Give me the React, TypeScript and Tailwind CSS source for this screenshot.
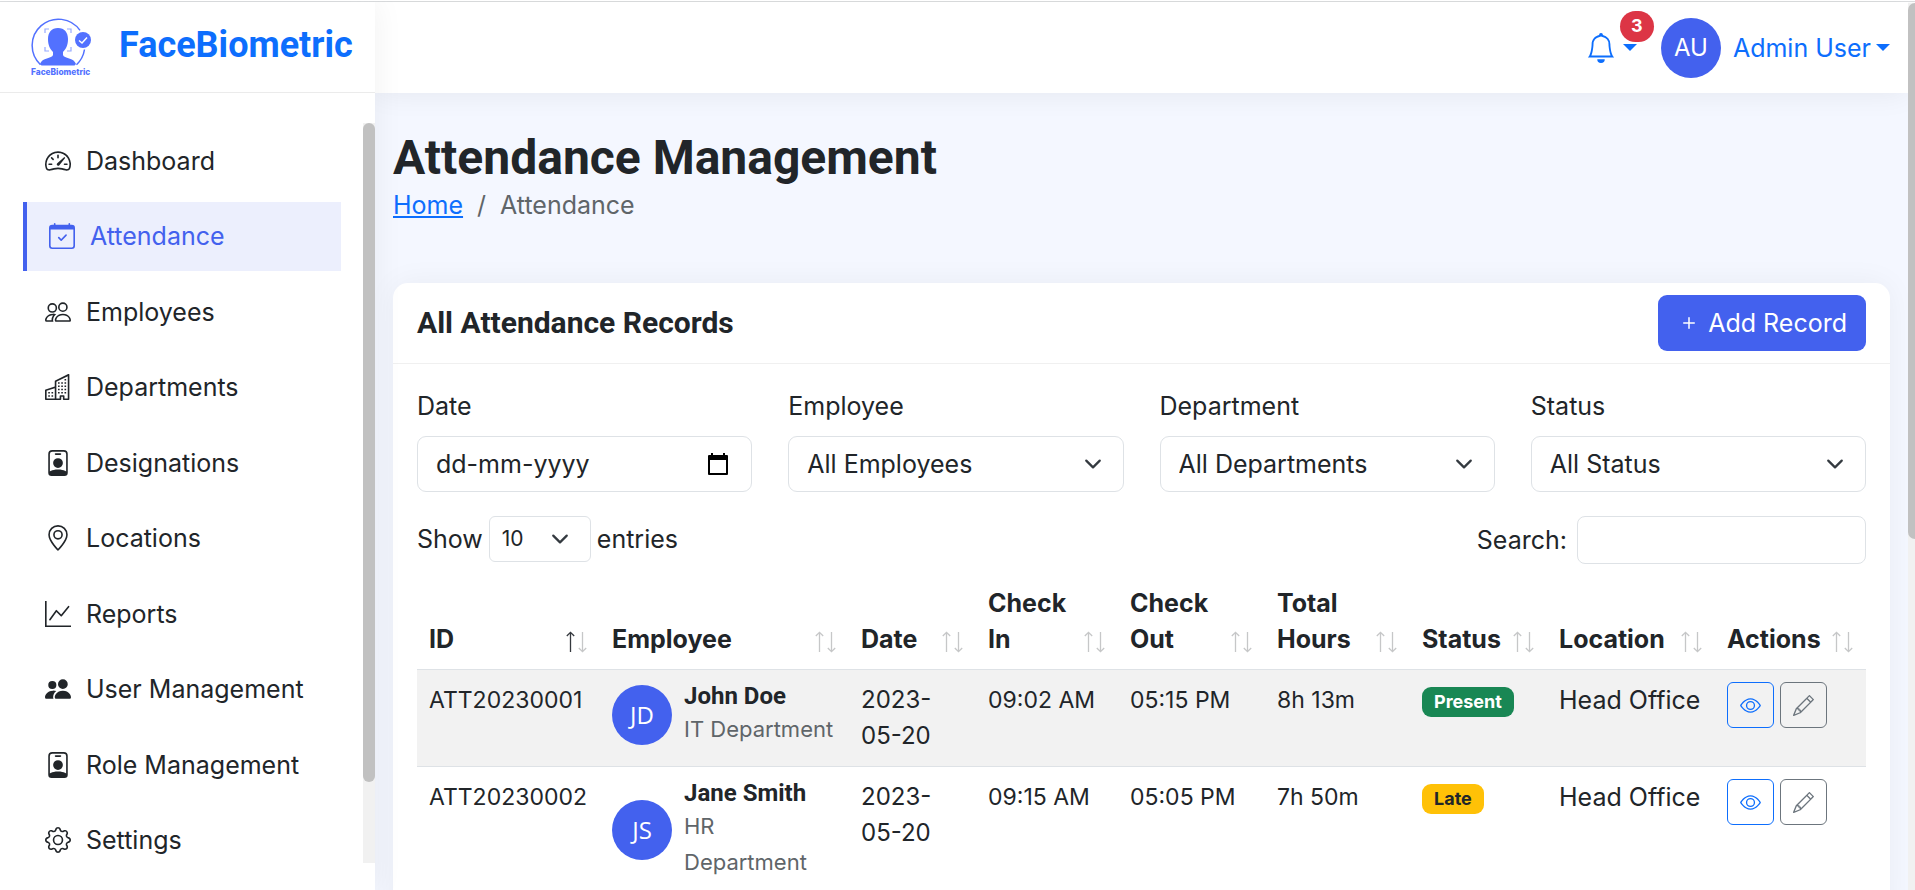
import type { ReactNode } from "react";
import type { IconType } from "react-icons";
import {
  BsBell,
  BsBuildings,
  BsEye,
  BsGear,
  BsGeoAlt,
  BsGraphUp,
  BsPencil,
  BsPeople,
  BsPeopleFill,
  BsPlus,
  BsSpeedometer2,
} from "react-icons/bs";

function CalendarCheck({ className }: { className?: string }) {
  return (
    <svg viewBox="0 0 16 16" fill="currentColor" className={className}>
      <path d="M10.854 7.146a.5.5 0 0 1 0 .708l-3 3a.5.5 0 0 1-.708 0l-1.500-1.500a.5.5 0 1 1 .708-.708L7.500 9.793l2.646-2.647a.5.5 0 0 1 .708 0" />
      <path d="M3.500 0a.5.5 0 0 1 .5.5V1h8V.5a.5.5 0 0 1 1 0V1h1a2 2 0 0 1 2 2v11a2 2 0 0 1-2 2H2a2 2 0 0 1-2-2V3a2 2 0 0 1 2-2h1V.5a.5.5 0 0 1 .5-.5M1 4v10a1 1 0 0 0 1 1h12a1 1 0 0 0 1-1V4z" />
    </svg>
  );
}

function IdBadge({ className }: { className?: string }) {
  return (
    <svg viewBox="0 0 16 16" fill="currentColor" className={className}>
      <path d="M6.500 2a.5.5 0 0 0 0 1h3a.5.5 0 0 0 0-1zM11 8a3 3 0 1 1-6 0 3 3 0 0 1 6 0" />
      <path d="M4.500 0A2.500 2.500 0 0 0 2 2.500V14a2 2 0 0 0 2 2h8a2 2 0 0 0 2-2V2.500A2.500 2.500 0 0 0 11.500 0zM3 2.500A1.500 1.500 0 0 1 4.500 1h7A1.500 1.500 0 0 1 13 2.500v10.795a4.200 4.200 0 0 0-.776-.492C11.392 12.387 10.063 12 8 12s-3.392.387-4.224.803a4.200 4.200 0 0 0-.776.492z" />
    </svg>
  );
}

type NavIcon = IconType | ((p: { className?: string }) => ReactNode);

const NAV: { label: string; icon: NavIcon; active?: boolean }[] = [
  { label: "Dashboard", icon: BsSpeedometer2 },
  { label: "Attendance", icon: CalendarCheck, active: true },
  { label: "Employees", icon: BsPeople },
  { label: "Departments", icon: BsBuildings },
  { label: "Designations", icon: IdBadge },
  { label: "Locations", icon: BsGeoAlt },
  { label: "Reports", icon: BsGraphUp },
  { label: "User Management", icon: BsPeopleFill },
  { label: "Role Management", icon: IdBadge },
  { label: "Settings", icon: BsGear },
];

const COLUMNS = [
  { label: "ID", width: "w-[183px]", sorted: true },
  { label: "Employee", width: "w-[249px]" },
  { label: "Date", width: "w-[127px]" },
  { label: "Check In", width: "w-[142px]" },
  { label: "Check Out", width: "w-[147px]" },
  { label: "Total Hours", width: "w-[145px]" },
  { label: "Status", width: "w-[137px]" },
  { label: "Location", width: "w-[168px]" },
  { label: "Actions", width: "w-[151px]" },
];

const RECORDS = [
  {
    id: "ATT20230001",
    initials: "JD",
    name: "John Doe",
    department: "IT Department",
    date: "2023-05-20",
    checkIn: "09:02 AM",
    checkOut: "05:15 PM",
    total: "8h 13m",
    status: "Present",
    location: "Head Office",
  },
  {
    id: "ATT20230002",
    initials: "JS",
    name: "Jane Smith",
    department: "HR Department",
    date: "2023-05-20",
    checkIn: "09:15 AM",
    checkOut: "05:05 PM",
    total: "7h 50m",
    status: "Late",
    location: "Head Office",
  },
];

function Logo() {
  return (
    <svg viewBox="0 0 60 58" className="h-[58px] w-[60px] shrink-0" aria-label="FaceBiometric logo">
      <g fill="none" stroke="#5271ff">
        <path d="M9.500 46.700A26.300 26.300 0 1 1 49 12.400M53.500 31.500A26.300 26.300 0 0 1 45.500 46.700" strokeWidth="1.500" />
        <path d="M14 15v-4h4M36 11h4v4M40 29v4h-4M18 33h-4v-4" strokeWidth="1.200" strokeOpacity="0.600" />
      </g>
      <path
        d="M27 10c-6.500 0-10 4.500-10 11 0 6 2 10 5 13v3c-1 3.500-11 2.500-13 9l1.500 1.500h33L45 46c-2-6.500-12-5.500-13-9v-3c3-3 5-7 5-13 0-6.500-3.500-11-10-11z"
        fill="#5271ff"
      />
      <circle cx="52" cy="22" r="8" fill="#5271ff" />
      <path d="M48 22.500l3 2.500 5-5.500" fill="none" stroke="#fff" strokeWidth="1.500" />
      <text x="0" y="57" fontSize="8.300" fontWeight="800" fill="#5271ff" fontFamily="Inter, sans-serif">
        FaceBiometric
      </text>
    </svg>
  );
}

function Caret() {
  return (
    <svg viewBox="0 0 14 7" className="h-[7px] w-3.5" fill="currentColor" aria-hidden="true">
      <path d="M0 0h14L7 7z" />
    </svg>
  );
}

function Chevron({ className }: { className: string }) {
  return (
    <svg
      viewBox="0 0 16 16"
      className={`pointer-events-none absolute top-1/2 -translate-y-1/2 ${className}`}
      fill="none"
      stroke="#343a40"
      strokeWidth="2"
      strokeLinecap="round"
      strokeLinejoin="round"
      aria-hidden="true"
    >
      <path d="m2 5 6 6 6-6" />
    </svg>
  );
}

function SortArrows({ sorted }: { sorted?: boolean }) {
  return (
    <svg viewBox="0 0 22 22" className="mb-1 h-[22px] w-[22px] shrink-0" fill="none" aria-hidden="true">
      <path d="M4.500 21V1M.8 5l3.700-3.700L8.200 5" stroke={sorted ? "#35393e" : "#c6c7c8"} strokeWidth="1.300" />
      <path d="M16.500 1v20M12.800 17l3.700 3.700 3.700-3.700" stroke="#c6c7c8" strokeWidth="1.300" />
    </svg>
  );
}

function FilterSelect({ id, label, option }: { id: string; label: string; option: string }) {
  return (
    <div className="flex flex-col gap-3">
      <label htmlFor={id}>{label}</label>
      <div className="relative">
        <select
          id={id}
          className="h-14 w-full appearance-none rounded-[9px] border border-[#dee2e6] bg-white pr-14 pl-[18px]"
        >
          <option>{option}</option>
        </select>
        <Chevron className="right-[22px] size-[18px]" />
      </div>
    </div>
  );
}

function Sidebar() {
  return (
    <aside className="z-20 flex w-[375px] shrink-0 flex-col bg-white shadow-[0_0_30px_rgba(0,0,0,0.06)]">
      <div className="flex h-[91px] shrink-0 items-center gap-7 border-b border-[#ebebeb] pl-[31px]">
        <Logo />
        <span className="pb-1 font-['Roboto',sans-serif] text-[36px] leading-none font-bold text-[#0d6efd]">
          FaceBiometric
        </span>
      </div>
      <div className="mt-[30px] mb-[27px] flex min-h-0 flex-1 overflow-hidden">
        <nav className="min-w-0 flex-1 pt-[3px]">
          <ul className="flex h-[749px] flex-col justify-between pr-[22px] pl-[23px]">
            {NAV.map(({ label, icon: Icon, active }) => (
              <li key={label}>
                <a
                  href="#"
                  className={
                    active
                      ? "flex h-[69px] items-center gap-[15px] border-l-4 border-[#4361ee] bg-[#eceffd] pl-[22px] text-[#4361ee]"
                      : "flex h-[69px] items-center gap-[15px] pl-[22px]"
                  }
                >
                  <Icon className="size-[26px] shrink-0" />
                  {label}
                </a>
              </li>
            ))}
          </ul>
        </nav>
        <div className="w-3 shrink-0 bg-[#f1f1f1]" aria-hidden="true">
          <div className="h-[89%] rounded-full bg-[#c1c1c1]" />
        </div>
      </div>
    </aside>
  );
}

function Topbar() {
  return (
    <header className="z-10 flex h-[91px] shrink-0 items-center justify-end bg-white pr-[18px] text-[#0d6efd] shadow-[0_0_30px_rgba(0,0,0,0.07)]">
      <button type="button" aria-label="Notifications" className="relative flex items-center gap-[7px]">
        <BsBell className="size-[30px]" />
        <Caret />
        <span className="absolute -top-[22px] -right-[17px] flex h-[31px] w-[34px] items-center justify-center rounded-full bg-[#dc3545] text-lg font-bold text-white">
          3
        </span>
      </button>
      <button type="button" className="ml-6 flex items-center gap-3">
        <span className="flex size-[60px] items-center justify-center rounded-full bg-[#4361ee] text-2xl text-white">
          AU
        </span>
        <span className="flex items-center gap-[5px]">
          Admin User
          <Caret />
        </span>
      </button>
    </header>
  );
}

function RecordsTable() {
  return (
    <table className="mt-[9px] w-full table-fixed border-collapse text-left">
      <thead>
        <tr className="border-b border-[#dee2e6]">
          {COLUMNS.map((c) => (
            <th key={c.label} className={`px-3 py-3 align-bottom font-bold ${c.width}`}>
              <div className="flex items-end justify-between">
                <span>{c.label}</span>
                <SortArrows sorted={c.sorted} />
              </div>
            </th>
          ))}
        </tr>
      </thead>
      <tbody className="text-2xl leading-9">
        {RECORDS.map((r) => (
          <tr key={r.id} className="border-b border-[#dee2e6] align-top odd:bg-[#f2f2f2]">
            <td className="py-3 pl-3 text-[23px] whitespace-nowrap">{r.id}</td>
            <td className="px-3 py-3">
              <div className="flex items-center gap-3">
                <span className="flex size-[60px] shrink-0 items-center justify-center rounded-full bg-[#4361ee] font-['Open_Sans',sans-serif] text-white">
                  {r.initials}
                </span>
                <div>
                  <div className="font-['Roboto',sans-serif] leading-[29px] font-bold">{r.name}</div>
                  <div className="text-[22px] text-[#5f6569]">{r.department}</div>
                </div>
              </div>
            </td>
            <td className="px-3 py-3">{r.date}</td>
            <td className="py-3 pl-3 text-[23px] whitespace-nowrap">{r.checkIn}</td>
            <td className="py-3 pl-3 text-[23px] whitespace-nowrap">{r.checkOut}</td>
            <td className="py-3 pl-3 text-[23px] whitespace-nowrap">{r.total}</td>
            <td className="px-3 py-3">
              <span
                className={
                  r.status === "Present"
                    ? "mt-[5px] inline-flex h-[30px] items-center rounded-[9px] bg-[#198754] px-3 text-lg font-bold text-white"
                    : "mt-[5px] inline-flex h-[30px] items-center rounded-[9px] bg-[#ffc107] px-3 text-lg font-bold text-[#212529]"
                }
              >
                {r.status}
              </span>
            </td>
            <td className="py-3 pl-3 text-[25px] whitespace-nowrap">{r.location}</td>
            <td className="px-3 py-3">
              <div className="flex gap-[6px]">
                <button
                  type="button"
                  aria-label={`View ${r.id}`}
                  className="flex h-[46px] w-[47px] items-center justify-center rounded-md border border-[#0d6efd] text-[#0d6efd]"
                >
                  <BsEye className="size-[21px]" />
                </button>
                <button
                  type="button"
                  aria-label={`Edit ${r.id}`}
                  className="flex h-[46px] w-[47px] items-center justify-center rounded-md border border-[#6c757d] text-[#6c757d]"
                >
                  <BsPencil className="size-[21px]" />
                </button>
              </div>
            </td>
          </tr>
        ))}
      </tbody>
    </table>
  );
}

export default function App() {
  return (
    <div className="flex h-screen flex-col overflow-hidden border-t border-white bg-white font-['Inter',sans-serif] text-[25px] leading-9 text-[#212529]">
      <div className="h-px shrink-0 bg-[#dee0e2]" />
      <div className="flex min-h-0 flex-1">
        <Sidebar />
        <div className="flex min-w-0 flex-1 flex-col">
          <Topbar />
          <main className="min-h-0 flex-1 overflow-hidden bg-[#f4f7ff] pt-9 pr-[18px] pl-[18px]">
            <h1 className="font-['Roboto',sans-serif] text-[48px] leading-[58px] font-bold">Attendance Management</h1>
            <nav aria-label="Breadcrumb" className="flex gap-[14px]">
              <a href="#" className="text-[#0d6efd] underline">
                Home
              </a>
              <span className="text-[#5f6569]">/</span>
              <span className="text-[#5f6569]">Attendance</span>
            </nav>
            <section className="mt-[60px] rounded-[15px] bg-white pb-6 shadow-[0_0_30px_rgba(0,0,0,0.05)]">
              <div className="flex items-center justify-between border-b border-[#f0f0f0] px-6 py-3">
                <h2 className="font-['Roboto',sans-serif] text-[30px] font-bold">All Attendance Records</h2>
                <button
                  type="button"
                  className="flex h-14 items-center gap-[7px] rounded-[9px] bg-[#4361ee] px-[19px] text-white"
                >
                  <BsPlus className="size-6" />
                  Add Record
                </button>
              </div>
              <div className="px-6 pt-6">
                <div className="grid grid-cols-4 gap-9">
                  <div className="flex flex-col gap-3">
                    <label htmlFor="date">Date</label>
                    <div className="relative">
                      <input
                        id="date"
                        type="text"
                        placeholder="dd-mm-yyyy"
                        className="h-14 w-full rounded-[9px] border border-[#dee2e6] bg-white px-[18px] placeholder:text-[#212529]"
                      />
                      <button
                        type="button"
                        aria-label="Open calendar"
                        className="absolute top-1/2 right-6 -translate-y-1/2 text-black"
                      >
                        <svg viewBox="0 0 20 22" className="h-[22px] w-5" fill="currentColor">
                          <path
                            d="M3 0h2v2h10V0h2v2h2a1 1 0 0 1 1 1v18a1 1 0 0 1-1 1H1a1 1 0 0 1-1-1V3a1 1 0 0 1 1-1h2zM2 7v13h16V7z"
                            fillRule="evenodd"
                          />
                        </svg>
                      </button>
                    </div>
                  </div>
                  <FilterSelect id="employee" label="Employee" option="All Employees" />
                  <FilterSelect id="department" label="Department" option="All Departments" />
                  <FilterSelect id="status" label="Status" option="All Status" />
                </div>
                <div className="mt-6 flex items-start justify-between">
                  <div className="flex items-center gap-[6px]">
                    <label htmlFor="length">Show</label>
                    <div className="relative">
                      <select
                        id="length"
                        className="block h-[46px] w-[102px] appearance-none rounded-md border border-[#dee2e6] bg-white pl-3 text-[21px]"
                      >
                        <option>10</option>
                      </select>
                      <Chevron className="right-[22px] size-[18px]" />
                    </div>
                    <span>entries</span>
                  </div>
                  <div className="flex items-center gap-[10px]">
                    <label htmlFor="search">Search:</label>
                    <input
                      id="search"
                      type="search"
                      className="h-12 w-[289px] rounded-lg border border-[#dee2e6] bg-white px-3"
                    />
                  </div>
                </div>
                <RecordsTable />
              </div>
            </section>
          </main>
        </div>
        <div className="z-20 mt-px w-[7px] shrink-0 bg-[#f1f1f1]" aria-hidden="true">
          <div className="h-[536px] rounded-tl-full rounded-bl-full bg-[#c1c1c1]" />
        </div>
      </div>
    </div>
  );
}
